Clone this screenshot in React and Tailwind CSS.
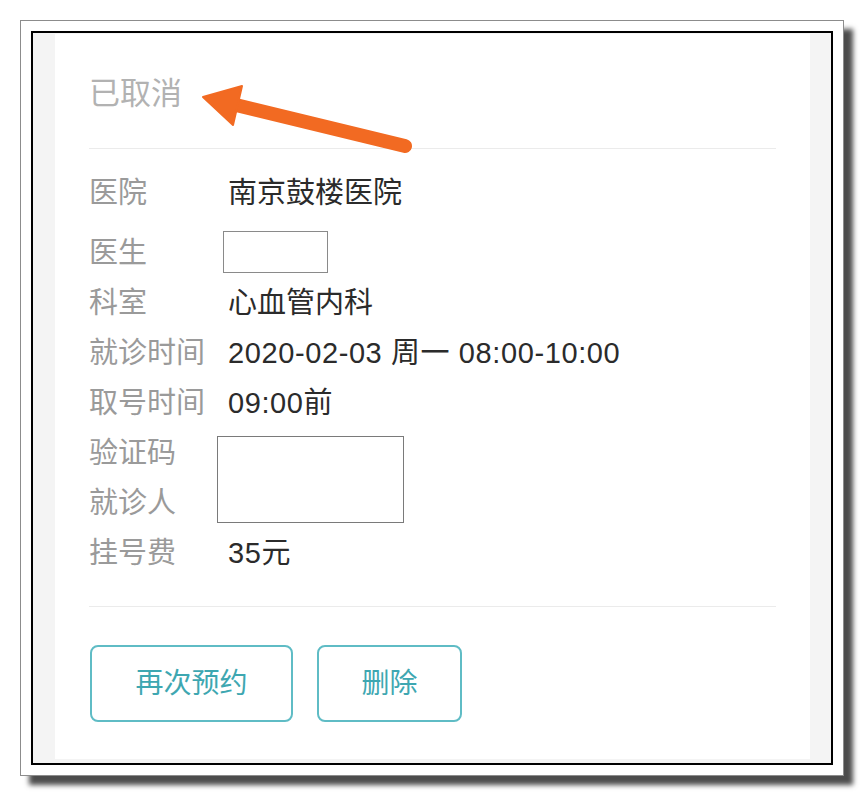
import React from "react";

const rows1 = [
  { label: "科室", value: "心血管内科", num: false },
  { label: "就诊时间", value: "2020-02-03 周一 08:00-10:00", num: true },
  { label: "取号时间", value: "09:00前", num: true },
];

function Row({ label, children, num = false, className = "" }) {
  return (
    <div className={"flex h-[50px] items-center " + className}>
      <div className="w-[139px] shrink-0 text-[#9a9a9a]">{label}</div>
      <div className={num ? "tracking-[0.6px] text-[#2b2b2b]" : "text-[#2b2b2b]"}>{children}</div>
    </div>
  );
}

export default function App() {
  return (
    <div
      className="relative h-[796px] w-[864px] overflow-hidden bg-white"
      style={{ fontFamily: '"Liberation Sans", "Noto Sans CJK SC", sans-serif' }}
    >
      <div className="ml-[20px] mt-[20px] h-[756px] w-[824px] border border-[#8c8c8c] bg-white p-[10px] shadow-[9px_9px_5px_rgba(0,0,0,0.7)]">
        <div className="flex h-full w-full flex-col border-2 border-black bg-[#f4f4f4] pb-[4px] pl-[22px] pr-[21px] pt-[1px]">
          <div className="flex flex-1 flex-col bg-white px-[34px]">
            <div className="pb-[36px] pt-[42px] text-[31px] leading-[36px] text-[#b2b2b2]">
              已取消
            </div>
            <div className="h-px bg-[#ebebeb]" />
            <div className="pb-[27px] pt-[20px] text-[29px]">
              <Row label="医院">南京鼓楼医院</Row>
              <Row label="医生" className="mt-[10px]">
                <div className="-ml-[5px] mt-[-4px] h-[42px] w-[105px] border border-[#8a8a8a]" />
              </Row>
              {rows1.map((r) => (
                <Row key={r.label} label={r.label} num={r.num}>
                  {r.value}
                </Row>
              ))}
              <div className="flex">
                <div className="w-[139px] shrink-0 text-[#9a9a9a]">
                  <div className="flex h-[50px] items-center">验证码</div>
                  <div className="flex h-[50px] items-center">就诊人</div>
                </div>
                <div className="-ml-[11px] mt-[7px] h-[87px] w-[187px] border border-[#7a7a7a]" />
              </div>
              <Row label="挂号费" num>35元</Row>
            </div>
            <div className="h-px bg-[#ebebeb]" />
            <div className="flex gap-[24px] pb-[36px] pt-[38px] pl-[1px]">
              <button className="flex h-[77px] w-[203px] items-center justify-center rounded-[8px] border-2 border-[#5fbcc5] text-[28px] text-[#3ea7b1]">
                再次预约
              </button>
              <button className="flex h-[77px] w-[145px] items-center justify-center rounded-[8px] border-2 border-[#5fbcc5] text-[28px] text-[#3ea7b1]">
                删除
              </button>
            </div>
          </div>
        </div>
      </div>
      <svg
        className="pointer-events-none absolute left-0 top-0"
        width="864"
        height="796"
        viewBox="0 0 864 796"
      >
        <line
          x1="236"
          y1="105"
          x2="405"
          y2="146"
          stroke="#f26a22"
          strokeWidth="14"
          strokeLinecap="round"
        />
        <polygon points="203,97 242,86 233,125" fill="#f26a22" stroke="#f26a22" strokeWidth="2" strokeLinejoin="round" />
      </svg>
    </div>
  );
}
